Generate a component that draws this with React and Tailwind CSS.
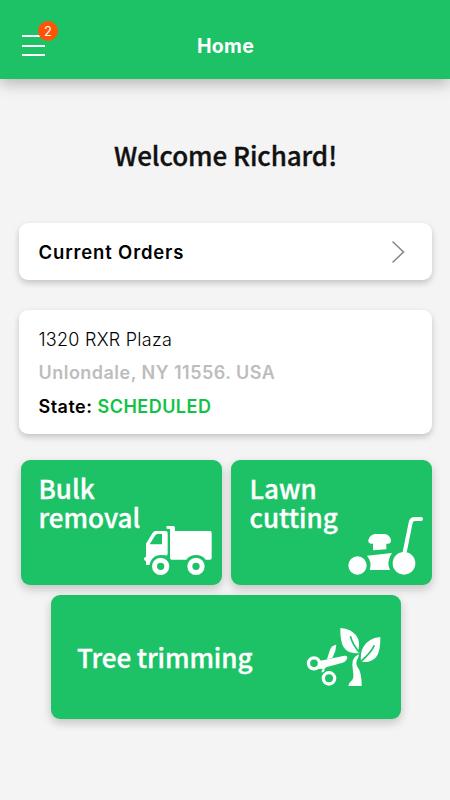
function TruckIcon() {
  return (
    <svg width="68" height="50" viewBox="402 228 204 150" fill="none">
      <path
        fillRule="evenodd"
        fill="#fff"
        d="M437 243H467Q473 243 473 249V311Q473 317 467 317H474Q466 315 452 315Q430 316 422 334L418 345H410Q408 345 408 341V334Q402 331 402 326Q402 321 408 320V281L427 250Q431 243 437 243ZM442 252Q438 252 435 257L419 283H456V252Z"
      />
      <path
        fill="#fff"
        d="M469 232Q469 228 473 228H490Q495 228 495 233V243H600Q605 243 605 248V324Q605 329 600 329H587Q577 315 558 315Q539 315 529 329H485Q480 329 480 324V237H473Q469 237 469 232Z"
      />
      <circle cx="452" cy="349" r="18.5" stroke="#fff" strokeWidth="15" />
      <circle cx="558" cy="349" r="18.5" stroke="#fff" strokeWidth="15" />
    </svg>
  );
}

function MowerIcon() {
  return (
    <svg width="76" height="59" viewBox="369 201 228 177" fill="#fff">
      <circle cx="397.5" cy="346.5" r="27.5" />
      <circle cx="537" cy="340" r="34" />
      <path d="M538 312L557 218Q559 207 570 207H588" fill="none" stroke="#fff" strokeWidth="12" strokeLinecap="round" />
      <path d="M450 252H478Q494 253 498 270Q499 281 488 281H484V298L444 301V281H438Q429 280 430 271Q434 254 450 252Z" />
      <path d="M426 317L501 309Q483 335 495 360H434Q442 336 426 317Z" />
    </svg>
  );
}

function TreeIcon() {
  return (
    <svg width="76" height="60" viewBox="33 36 228 180" fill="#fff">
      <circle cx="57" cy="145" r="16.5" fill="none" stroke="#fff" strokeWidth="10" />
      <circle cx="102" cy="190" r="17" fill="none" stroke="#fff" strokeWidth="10" />
      <path d="M73 138L148 122Q158 121 157 128Q154 139 143 143L96 156Q87 159 88 169L79 173Q81 166 83 161L70 162Z" />
      <path d="M96 133L105 104Q111 91 124 89L121 108L112 129Z" />
      <path d="M136 39Q169 42 183 61Q197 80 190 106L194 114Q161 119 146 97Q135 78 136 39Z" />
      <path d="M256 66Q257 109 243 127Q229 143 205 141L198 138Q195 113 205 96Q219 70 256 66Z" />
      {/* leaf veins */}
      <path d="M166 64Q174 91 193 112M238 91Q228 113 199 138" fill="none" stroke="#1dc267" strokeWidth="5" />
      <path d="M192 118Q191 128 186 135Q181 145 188 157Q200 171 200 213H160Q160 205 168 199Q177 191 175 177L172 150Q171 126 192 118Z" />
    </svg>
  );
}

const services = [
  { id: 'bulk', lines: ['Bulk', 'removal'], Icon: TruckIcon, pad: 'pr-[10px] pb-[9px]', left: 'left-[18px]' },
  { id: 'lawn', lines: ['Lawn', 'cutting'], Icon: MowerIcon, pad: 'pr-[8px] pb-[9px]', left: 'left-[19px]' },
];

export default function App() {
  return (
    <div className="w-[450px] h-[800px] overflow-hidden bg-[#f4f4f4] font-['Inter',sans-serif] text-black">
      <header className="relative h-[79px] bg-[#1dc267] shadow-[0_5px_14px_rgba(0,0,0,0.25)] flex items-start justify-center pt-[31px]">
        <button className="absolute left-[22px] top-[35px] flex flex-col gap-[7.5px]">
          <span className="block w-[23px] h-[2px] bg-white" />
          <span className="block w-[23px] h-[2px] bg-white" />
          <span className="block w-[23px] h-[2px] bg-white" />
          <span className="absolute left-[16px] -top-[14px] size-[20px] rounded-full bg-[#ff5408] text-white text-[13px] leading-[20px] text-center">2</span>
        </button>
        <h1 className="pl-[1px] text-[19.5px] leading-[30px] tracking-[0.3px] font-bold text-white">Home</h1>
      </header>

      <h2 className="mt-[56px] pl-[1px] text-center text-[26px] leading-[40px] tracking-[-0.08px] font-medium text-[#111] [-webkit-text-stroke:0.35px] font-['Noto_Sans_CJK_JP',sans-serif]">
        Welcome Richard!
      </h2>

      <main className="mt-[48px] pl-[19px] pr-[18px]">
        <div className="h-[57px] rounded-[9px] bg-white shadow-[0_3px_6px_rgba(0,0,0,0.2)] flex items-center justify-between pl-[19.5px] pr-[27px]">
          <span className="pt-[2px] text-[18.5px] tracking-[0.84px] font-semibold">Current Orders</span>
          <svg width="14" height="24" viewBox="0 0 14 24" fill="none" stroke="#858585" strokeWidth="1.5">
            <path d="M1.5 1.5L12.5 12L1.5 22.5" />
          </svg>
        </div>

        <div className="mt-[29.5px] h-[124.5px] rounded-[9px] bg-white shadow-[0_3px_6px_rgba(0,0,0,0.2)] pl-[19.5px] pt-[13px] text-[18px] leading-[33.5px]">
          <p className="font-light tracking-[0.25px]">1320 RXR Plaza</p>
          <p className="font-semibold tracking-[0.48px] text-[#bdbdbd]">Unlondale, NY 11556. USA</p>
          <p className="font-semibold tracking-[0.48px]">
            State: <span className="text-[#12c244]">SCHEDULED</span>
          </p>
        </div>

        <div className="mt-[26px] ml-[1.5px] flex gap-[8.5px] font-['Noto_Sans_CJK_JP',sans-serif]">
          {services.map(({ id, lines, Icon, pad, left }) => (
            <button
              key={id}
              className={`relative w-[201.5px] h-[124.5px] rounded-[9px] bg-[#1dc267] shadow-[0_4px_10px_rgba(0,0,0,0.2)] flex items-end justify-end ${pad}`}
            >
              <span className={`absolute ${left} top-[13px] text-left text-[26px] leading-[29px] font-medium text-white [-webkit-text-stroke:0.35px]`}>
                {lines[0]}
                <br />
                {lines[1]}
              </span>
              <Icon />
            </button>
          ))}
        </div>

        <button className="mt-[10px] ml-[31.5px] w-[350px] h-[124.5px] rounded-[9px] bg-[#1dc267] shadow-[0_4px_10px_rgba(0,0,0,0.2)] flex items-center justify-between pl-[26.5px] pr-[18.5px]">
          <span className="text-[26px] tracking-[-0.08px] font-medium text-white [-webkit-text-stroke:0.35px] font-['Noto_Sans_CJK_JP',sans-serif]">Tree trimming</span>
          <TreeIcon />
        </button>
      </main>
    </div>
  );
}
